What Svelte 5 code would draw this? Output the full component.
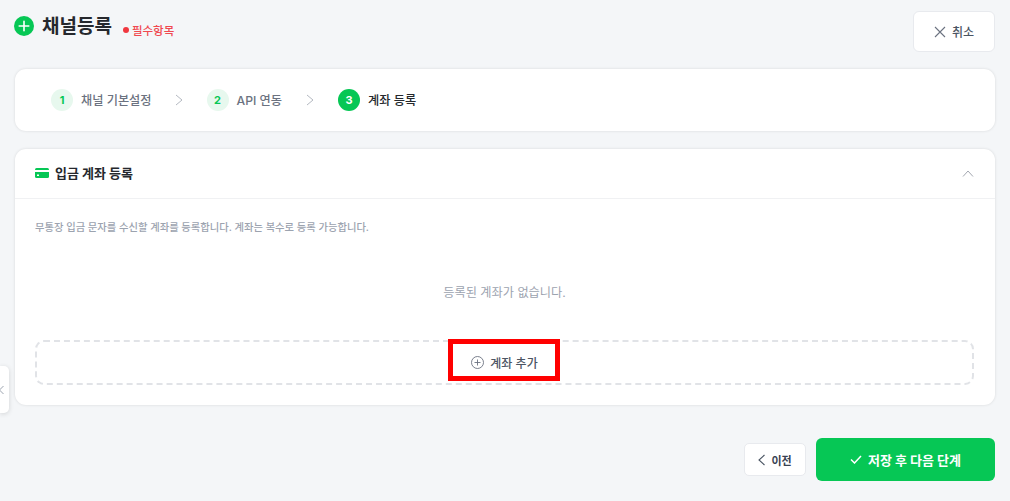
<script lang="ts">
  const steps = [
    { num: 1, label: '채널 기본설정', done: true },
    { num: 2, label: 'API 연동', done: true },
    { num: 3, label: '계좌 등록', done: false }
  ]
</script>

<div class="page">
  <button class="side-tab" aria-label="닫기">
    <svg width="8" height="10" viewBox="0 0 8 10"><path d="M3.500 1L-.5 5l4 4" fill="none" stroke="#9ca3af" stroke-width="1"/></svg>
  </button>

  <header class="top">
    <div class="title-wrap">
      <svg class="title-icon" width="20" height="20" viewBox="0 0 20 20">
        <circle cx="10" cy="10" r="10" fill="#06c755"/>
        <path d="M10 5.200v9.600M5.200 10h9.600" stroke="#fff" stroke-width="1.600" stroke-linecap="round"/>
      </svg>
      <h1>채널등록</h1>
      <span class="required"><i></i>필수항목</span>
    </div>
    <button class="cancel">
      <svg width="12" height="12" viewBox="0 0 12 12"><path d="M1 1l10 10M11 1L1 11" stroke="#6b7280" stroke-width="1.100" fill="none"/></svg>
      취소
    </button>
  </header>

  <nav class="card steps">
    {#each steps as step, i}
      {#if i > 0}
        <svg class="sep" width="8" height="12" viewBox="0 0 8 12"><path d="M1 1l6 5-6 5" fill="none" stroke="#b4b9c1" stroke-width="1"/></svg>
      {/if}
      <div class="step" class:current={!step.done}>
        <span class="num">{step.num}</span>
        <span class="step-label">{step.label}</span>
      </div>
    {/each}
  </nav>

  <section class="card account">
    <div class="account-head">
      <div class="account-title">
        <svg width="14" height="10" viewBox="0 0 14 10">
          <rect width="14" height="10" rx="1.500" fill="#06c755"/>
          <rect y="2" width="14" height="2" fill="#fff"/>
          <rect x="2" y="6.500" width="2" height="1.500" fill="#fff"/>
        </svg>
        <h2>입금 계좌 등록</h2>
      </div>
      <svg width="12" height="7" viewBox="0 0 12 7"><path d="M1 6.500L6 1l5 5.500" fill="none" stroke="#a3a8b0" stroke-width="1"/></svg>
    </div>
    <div class="account-body">
      <p class="desc">무통장 입금 문자를 수신할 계좌를 등록합니다. 계좌는 복수로 등록 가능합니다.</p>
      <p class="empty">등록된 계좌가 없습니다.</p>
      <button class="add">
        <svg width="13" height="13" viewBox="0 0 13 13">
          <circle cx="6.500" cy="6.500" r="6" fill="none" stroke="#6b7280" stroke-width="0.900"/>
          <path d="M6.500 3.500v6M3.500 6.500h6" stroke="#6b7280" stroke-width="0.900"/>
        </svg>
        계좌 추가
      </button>
    </div>
    <div class="highlight"></div>
  </section>

  <footer class="actions">
    <button class="prev">
      <svg width="7" height="12" viewBox="0 0 7 12"><path d="M6.500 1L1 6l5.500 5" fill="none" stroke="#4b5563" stroke-width="1.100"/></svg>
      이전
    </button>
    <button class="next">
      <svg width="12" height="9" viewBox="0 0 12 9"><path d="M1 4.500l3.500 3.500L11 1" fill="none" stroke="#fff" stroke-width="1.500"/></svg>
      저장 후 다음 단계
    </button>
  </footer>
</div>

<style>
  :global(body) {
    margin: 0;
    background: #f4f6f8;
    overflow: hidden;
  }

  .page {
    position: relative;
    width: 1010px;
    height: 501px;
    box-sizing: border-box;
    padding: 11px 15px 0;
    font-family: Inter, "Noto Sans CJK KR", sans-serif;
    color: #25282d;
  }

  button {
    font-family: inherit;
    cursor: pointer;
  }

  .side-tab {
    position: absolute;
    left: 0;
    top: 366px;
    width: 9px;
    height: 47px;
    padding: 0;
    border: 0;
    background: #fff;
    border-radius: 0 5px 5px 0;
    box-shadow: 0 1px 5px rgba(0, 0, 0, 0.14);
    display: flex;
    align-items: center;
    justify-content: flex-start;
  }

  .top {
    display: flex;
    justify-content: space-between;
    align-items: flex-start;
    height: 41px;
    margin-bottom: 17px;
  }

  .title-wrap {
    display: flex;
    align-items: center;
    height: 32px;
  }

  .title-icon {
    margin-left: -1px;
    margin-right: 8px;
    margin-top: -3px;
  }

  h1 {
    margin: 0;
    font-size: 19px;
    font-weight: 700;
    line-height: 32px;
  }

  .required {
    display: flex;
    align-items: center;
    gap: 3px;
    margin-left: 11px;
    margin-top: 5px;
    color: #f0484f;
    font-size: 11.5px;
    font-weight: 500;
  }

  .required i {
    width: 6px;
    height: 6px;
    border-radius: 50%;
    background: #f0383f;
  }

  .cancel {
    width: 82px;
    height: 41px;
    display: flex;
    align-items: center;
    justify-content: center;
    gap: 6px;
    background: #fff;
    border: 1px solid #e8eaee;
    border-radius: 6px;
    font-size: 12px;
    font-weight: 500;
    color: #4b5563;
  }

  .card {
    background: #fff;
    border-radius: 11px;
    box-shadow: 0 0 3px rgba(0, 0, 0, 0.12);
    box-sizing: border-box;
  }

  .steps {
    height: 62px;
    display: flex;
    align-items: center;
    padding: 0 36px;
    margin-bottom: 18px;
  }

  .sep {
    margin: 0 24px;
  }

  .step:first-of-type + .sep {
    margin-left: 23px;
  }

  .step {
    display: flex;
    align-items: center;
    gap: 8px;
  }

  .num {
    width: 22px;
    height: 22px;
    border-radius: 50%;
    background: #e7f8ee;
    color: #06c755;
    font-size: 11px;
    font-weight: 700;
    display: flex;
    align-items: center;
    justify-content: center;
  }

  .step-label {
    font-size: 12.2px;
    font-weight: 500;
    color: #6b7280;
  }

  .current .num {
    background: #06c755;
    color: #fff;
  }

  .current .step-label {
    color: #25282d;
  }

  .account {
    position: relative;
    height: 256px;
  }

  .account-head {
    height: 49px;
    box-sizing: content-box;
    display: flex;
    align-items: center;
    justify-content: space-between;
    padding: 0 21px 0 20px;
    border-bottom: 1px solid #f0f1f3;
  }

  .account-title {
    display: flex;
    align-items: center;
    gap: 6px;
    margin-top: -2px;
  }

  h2 {
    margin: 0;
    font-size: 13px;
    font-weight: 700;
  }

  .account-body {
    padding: 20px 21px 0 20px;
  }

  .desc {
    margin: 0;
    font-size: 10.3px;
    line-height: 16px;
    color: #9ca3af;
    font-weight: 500;
  }

  .empty {
    margin: 49px 0 0;
    text-align: center;
    font-size: 12.2px;
    line-height: 18px;
    color: #9ca3af;
  }

  .add {
    margin-top: 38px;
    width: 100%;
    height: 45px;
    display: flex;
    align-items: center;
    justify-content: center;
    gap: 6px;
    background: #fff;
    border: 2px dashed #e1e3e7;
    border-radius: 9px;
    font-size: 12px;
    font-weight: 500;
    color: #4b5563;
  }

  .highlight {
    position: absolute;
    left: 433px;
    top: 190px;
    width: 112px;
    height: 42px;
    box-sizing: border-box;
    border: 5px solid #ff0000;
  }

  .actions {
    display: flex;
    justify-content: flex-end;
    align-items: center;
    gap: 10px;
    margin-top: 33px;
  }

  .prev {
    width: 62px;
    height: 33px;
    display: flex;
    align-items: center;
    justify-content: center;
    gap: 6px;
    background: #fff;
    border: 1px solid #e8eaee;
    border-radius: 5px;
    font-size: 11px;
    font-weight: 700;
    color: #374151;
  }

  .next {
    width: 179px;
    height: 43px;
    display: flex;
    align-items: center;
    justify-content: center;
    gap: 6px;
    background: #06c755;
    border: 0;
    border-radius: 6px;
    font-size: 13px;
    font-weight: 700;
    color: #fff;
  }
</style>
